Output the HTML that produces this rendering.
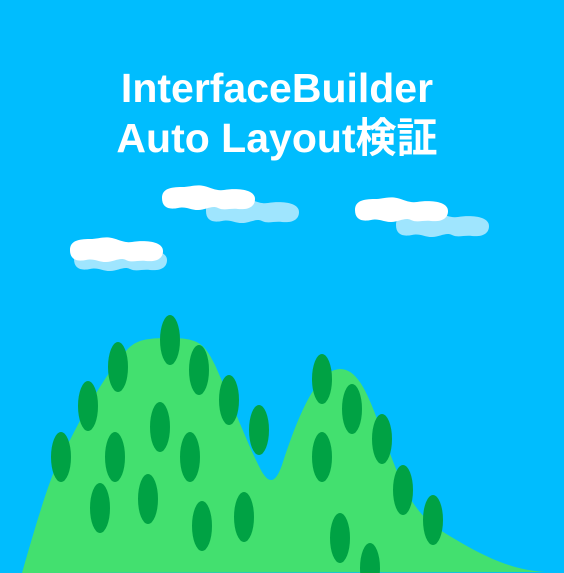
<!DOCTYPE html>
<html><head><meta charset="utf-8"><style>
html,body{margin:0;padding:0;width:564px;height:573px;overflow:hidden;background:#00bdfe}
.t{position:absolute;left:0;width:554px;text-align:center;color:#fff;font:bold 41px/50px "Liberation Sans","Noto Sans CJK JP",sans-serif;top:63px}
svg{position:absolute;left:0;top:0}
</style></head><body>
<svg width="564" height="573" viewBox="0 0 564 573">
<defs>
<path id="c" d="M0 13 C0 4 8 2 20 2 C28 2 34 -1 42 1 C50 3 54 6 62 5 C74 3 93 4 93 14 C93 22 86 25 76 24 C68 23 62 26 56 23 C50 20 44 25 36 25 C28 25 24 21 16 23 C6 25 0 22 0 13Z"/>
</defs>
<g fill="#9fe5fe">
<use href="#c" transform="translate(206,198)"/>
<use href="#c" transform="translate(74,246)"/>
<use href="#c" transform="translate(396,212)"/>
</g>
<g fill="#fff">
<use href="#c" transform="translate(162,185)"/>
<use href="#c" transform="translate(70,237)"/>
<use href="#c" transform="translate(355,197)"/>
</g>
<path fill="#43e06f" d="M22 573C40 510 55 460 70 440C90 400 110 370 125 352C135 340 145 338 170 338C200 338 205 345 215 365C235 410 250 450 262 472C270 485 276 482 282 465C295 425 315 370 340 369C360 369 370 400 385 440C400 480 410 510 440 530C480 555 510 570 545 572Z"/>
<g fill="#00a244">
<ellipse cx="170" cy="340" rx="10" ry="25"/><ellipse cx="118" cy="367" rx="10" ry="25"/><ellipse cx="199" cy="370" rx="10" ry="25"/>
<ellipse cx="88" cy="406" rx="10" ry="25"/><ellipse cx="229" cy="400" rx="10" ry="25"/><ellipse cx="160" cy="427" rx="10" ry="25"/>
<ellipse cx="259" cy="430" rx="10" ry="25"/><ellipse cx="61" cy="457" rx="10" ry="25"/><ellipse cx="115" cy="457" rx="10" ry="25"/>
<ellipse cx="190" cy="457" rx="10" ry="25"/><ellipse cx="100" cy="508" rx="10" ry="25"/><ellipse cx="148" cy="499" rx="10" ry="25"/>
<ellipse cx="202" cy="526" rx="10" ry="25"/><ellipse cx="244" cy="517" rx="10" ry="25"/><ellipse cx="322" cy="379" rx="10" ry="25"/>
<ellipse cx="352" cy="409" rx="10" ry="25"/><ellipse cx="382" cy="439" rx="10" ry="25"/><ellipse cx="322" cy="457" rx="10" ry="25"/>
<ellipse cx="403" cy="490" rx="10" ry="25"/><ellipse cx="433" cy="520" rx="10" ry="25"/><ellipse cx="340" cy="538" rx="10" ry="25"/>
<ellipse cx="370" cy="568" rx="10" ry="25"/>
</g>
</svg>
<div class="t">InterfaceBuilder<br>Auto Layout検証</div>
</body></html>
